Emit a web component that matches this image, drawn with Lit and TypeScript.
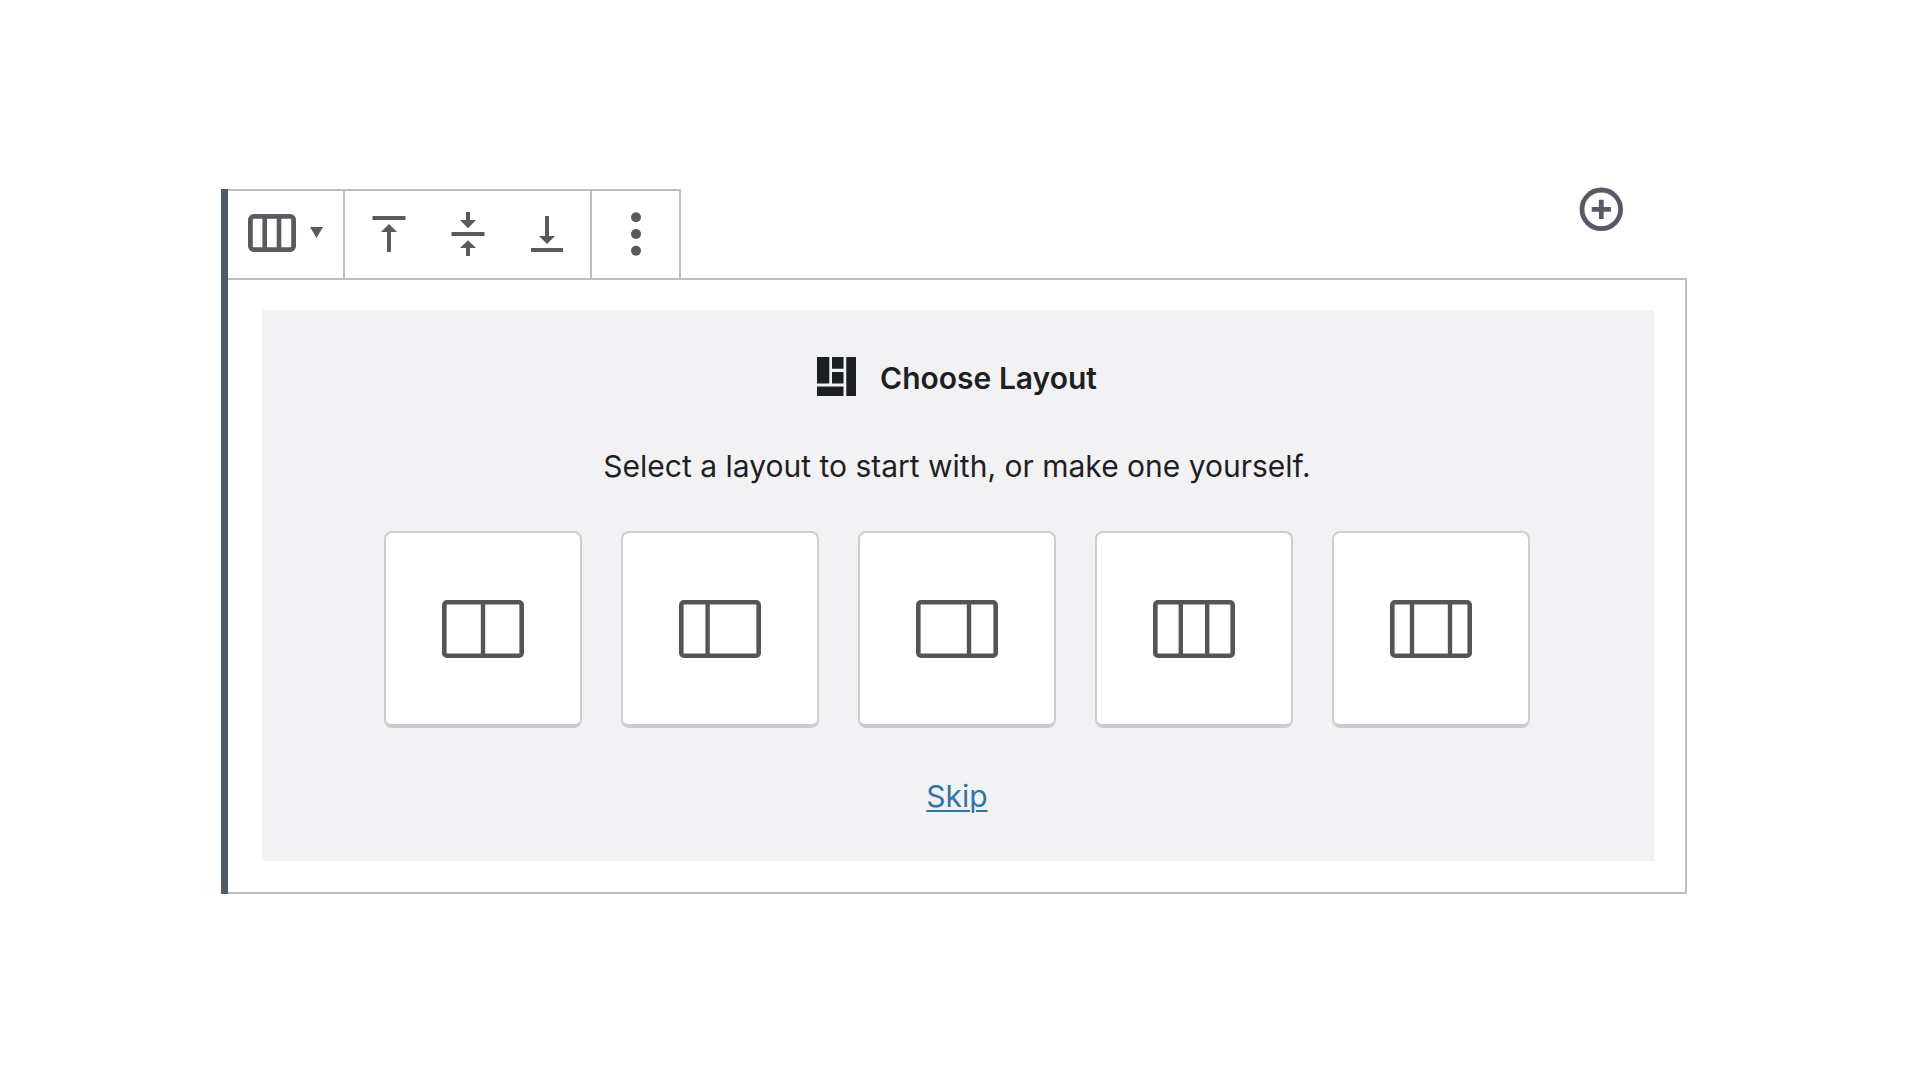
import { LitElement, html, css, svg } from "lit";
import { customElement } from "lit/decorators.js";

interface LayoutOption {
  label: string;
  dividers: number[];
}

const LAYOUTS: LayoutOption[] = [
  { label: "Two columns; equal split", dividers: [41] },
  { label: "Two columns; one-third, two-thirds split", dividers: [28.6] },
  { label: "Two columns; two-thirds, one-third split", dividers: [53] },
  { label: "Three columns; equal split", dividers: [27.8, 54.2] },
  { label: "Three columns; wide center column", dividers: [22, 60] },
];

@customElement("layout-card")
class LayoutCard extends LitElement {
  static properties = { option: { attribute: false } };
  declare option: LayoutOption;

  static styles = css`
    :host {
      display: block;
    }
    .card {
      display: flex;
      align-items: center;
      justify-content: center;
      box-sizing: border-box;
      width: 198px;
      height: 197px;
      padding: 0;
      background: #fff;
      border: 2px solid #ccced0;
      border-bottom: 4px solid #cbcccf;
      border-radius: 8px;
      color: #555558;
      cursor: pointer;
    }
    .icon {
      display: block;
      width: 82px;
      height: 58px;
    }
  `;

  render() {
    return html`
      <button class="card" type="button" aria-label=${this.option.label}>
        <svg class="icon" viewBox="0 0 82 58" fill="none" stroke="currentColor" stroke-width="4.6" aria-hidden="true">
          <rect x="2.3" y="2.3" width="77.4" height="53.4" rx="2.6" />
          ${this.option.dividers.map((x) => svg`<path d="M${x} 2V56" stroke-width="4.4" />`)}
        </svg>
      </button>
    `;
  }
}

@customElement("block-toolbar")
class BlockToolbar extends LitElement {
  static styles = css`
    :host {
      display: block;
    }
    .toolbar {
      display: flex;
      height: 87px;
      border-top: 2px solid #bdbec0;
    }
    .group {
      display: flex;
      border-right: 2px solid #bdbec0;
    }
    .group.align {
      padding: 0 4px;
    }
    .button {
      display: flex;
      align-items: center;
      justify-content: center;
      padding: 0 0 1px;
      border: 0;
      background: none;
      color: #575b60;
      cursor: pointer;
    }
    .switcher {
      gap: 14px;
      padding: 0 20px 3px;
    }
    .tool {
      width: 79px;
    }
    .more {
      width: 87px;
    }
    svg {
      display: block;
    }
  `;

  render() {
    return html`
      <div class="toolbar" role="toolbar" aria-label="Block tools">
        <div class="group">
          <button class="button switcher" type="button" aria-label="Change block type">
            <svg width="48" height="38" viewBox="0 0 48 38" fill="none" stroke="currentColor" aria-hidden="true">
              <rect x="2.4" y="2.4" width="43.2" height="33.2" rx="3.4" stroke-width="4.8" />
              <path d="M16.7 2V36M31 2V36" stroke-width="4.6" />
            </svg>
            <svg width="13" height="14" viewBox="0 0 13 14" fill="currentColor" aria-hidden="true">
              <path d="M0 1H13L6.5 12Z" />
            </svg>
          </button>
        </div>
        <div class="group align">
          <button class="button tool" type="button" aria-label="Vertically align top">
            <svg width="34" height="48" viewBox="0 0 34 48" fill="currentColor" aria-hidden="true">
              <path d="M0.5 6H33.5V10H0.5Z M17 14L25 22H19V42H15V22H9Z" />
            </svg>
          </button>
          <button class="button tool" type="button" aria-label="Vertically align middle">
            <svg width="34" height="48" viewBox="0 0 34 48" fill="currentColor" aria-hidden="true">
              <path d="M0.5 22H33.5V26H0.5Z M15 2H19V10H25L17 18.3L9 10H15Z M17 30.3L25 38H19V46H15V38H9Z" />
            </svg>
          </button>
          <button class="button tool" type="button" aria-label="Vertically align bottom">
            <svg width="34" height="48" viewBox="0 0 34 48" fill="currentColor" aria-hidden="true">
              <path d="M1 38H33V42H1Z M15 6H19V26H25L17 34L9 26H15Z" />
            </svg>
          </button>
        </div>
        <div class="group">
          <button class="button more" type="button" aria-label="More options">
            <svg width="12" height="48" viewBox="0 0 12 48" fill="currentColor" aria-hidden="true">
              <circle cx="6" cy="7.2" r="5" />
              <circle cx="6" cy="24" r="5" />
              <circle cx="6" cy="40.8" r="5" />
            </svg>
          </button>
        </div>
      </div>
    `;
  }
}

@customElement("app-root")
class AppRoot extends LitElement {
  static styles = css`
    :host {
      display: block;
      box-sizing: border-box;
      min-height: 100vh;
      padding: 189px 233px 100px 221px;
      background: #fff;
      color: #1e1f22;
      font-family: Inter, "Liberation Sans", sans-serif;
      font-size: 30px;
      line-height: 40px;
    }
    .block {
      border-left: 7px solid #505a64;
    }
    .top {
      display: flex;
      align-items: flex-start;
      justify-content: space-between;
      padding-right: 66px;
    }
    .add {
      display: block;
      width: 40px;
      height: 40px;
      padding: 0;
      border: 0;
      background: none;
      color: #555a63;
      cursor: pointer;
    }
    .add-icon {
      display: block;
      overflow: visible;
    }
    .frame {
      padding: 30px 31px 31px 34px;
      border: 2px solid #bdbec0;
      border-left: 0;
    }
    .placeholder {
      display: flex;
      flex-direction: column;
      align-items: center;
      padding: 47px 26px 45px 24px;
      background: #f2f2f4;
    }
    .title {
      display: flex;
      align-items: center;
      gap: 24px;
      margin: 0;
      font-size: 30px;
      font-weight: 600;
    }
    .hint {
      margin: 47px 0 45px;
      text-align: center;
    }
    .cards {
      display: flex;
      flex-wrap: wrap;
      justify-content: center;
      gap: 39px;
      margin: 0 0 48px;
      padding: 0;
      list-style: none;
    }
    .skip {
      color: #2e75a8;
      text-decoration: underline;
      text-decoration-thickness: 2px;
      text-underline-offset: 3px;
    }
  `;

  render() {
    return html`
      <main class="block">
        <div class="top">
          <block-toolbar></block-toolbar>
          <button class="add" type="button" aria-label="Add block">
            <svg class="add-icon" width="40" height="40" viewBox="0 0 40 40" fill="none" stroke="currentColor" stroke-width="4.8" aria-hidden="true">
              <circle cx="20.3" cy="20.3" r="19.3" />
              <path d="M10.7 20.3H29.9M20.3 10.7V29.9" />
            </svg>
          </button>
        </div>
        <div class="frame">
          <section class="placeholder" aria-labelledby="title">
            <h1 class="title" id="title">
              <svg width="39" height="42" viewBox="0 0 39 42" fill="#1b1e23" aria-hidden="true">
                <path d="M0 0H12.3V26.5H0Z M15 0H26.5V11.7H15Z M15 15H26.5V26.5H15Z M0 29.5H26.5V39H0Z M29.3 0H39V39H29.3Z" />
              </svg>
              <span>Choose Layout</span>
            </h1>
            <p class="hint">Select a layout to start with, or make one yourself.</p>
            <ul class="cards">
              ${LAYOUTS.map((option) => html`<li><layout-card .option=${option}></layout-card></li>`)}
            </ul>
            <a class="skip" href="#skip">Skip</a>
          </section>
        </div>
      </main>
    `;
  }
}
